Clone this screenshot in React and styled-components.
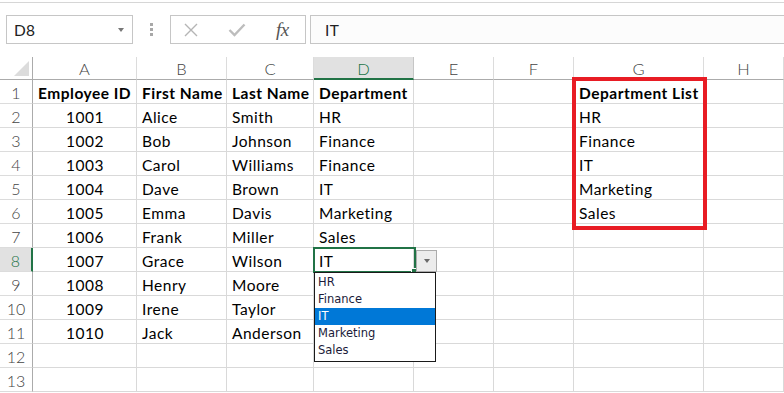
import React from 'react'
import styled, { createGlobalStyle } from 'styled-components'

const GlobalStyle = createGlobalStyle`
  html, body {
    margin: 0;
    padding: 0;
    background: #ffffff;
    overflow: hidden;
  }
  body {
    font-family: Lato, "Liberation Sans", sans-serif;
  }
`

const COLS = [
  { key: 'A', width: 104 },
  { key: 'B', width: 90 },
  { key: 'C', width: 87 },
  { key: 'D', width: 100 },
  { key: 'E', width: 80 },
  { key: 'F', width: 80 },
  { key: 'G', width: 130 },
  { key: 'H', width: 80 },
]

const ROWS = [
  [{ v: 'Employee ID', b: true }, { v: 'First Name', b: true }, { v: 'Last Name', b: true }, { v: 'Department', b: true }, null, null, { v: 'Department List', b: true }],
  [{ v: '1001', c: true }, { v: 'Alice' }, { v: 'Smith' }, { v: 'HR' }, null, null, { v: 'HR' }],
  [{ v: '1002', c: true }, { v: 'Bob' }, { v: 'Johnson' }, { v: 'Finance' }, null, null, { v: 'Finance' }],
  [{ v: '1003', c: true }, { v: 'Carol' }, { v: 'Williams' }, { v: 'Finance' }, null, null, { v: 'IT' }],
  [{ v: '1004', c: true }, { v: 'Dave' }, { v: 'Brown' }, { v: 'IT' }, null, null, { v: 'Marketing' }],
  [{ v: '1005', c: true }, { v: 'Emma' }, { v: 'Davis' }, { v: 'Marketing' }, null, null, { v: 'Sales' }],
  [{ v: '1006', c: true }, { v: 'Frank' }, { v: 'Miller' }, { v: 'Sales' }],
  [{ v: '1007', c: true }, { v: 'Grace' }, { v: 'Wilson' }, { v: 'IT' }],
  [{ v: '1008', c: true }, { v: 'Henry' }, { v: 'Moore' }],
  [{ v: '1009', c: true }, { v: 'Irene' }, { v: 'Taylor' }],
  [{ v: '1010', c: true }, { v: 'Jack' }, { v: 'Anderson' }],
  [],
  [],
]

const OPTIONS = ['HR', 'Finance', 'IT', 'Marketing', 'Sales']

const Page = styled.div`
  width: 784px;
  height: 393px;
  overflow: hidden;
  background: #fff;
`

const TopLine = styled.div`
  height: 2px;
  border-bottom: 1px solid #d6d6d6;
`

const FormulaBar = styled.div`
  display: flex;
  height: 29px;
  margin-top: 12px;
  margin-bottom: 13px;
`

const NameBox = styled.div`
  box-sizing: border-box;
  width: 127px;
  margin-left: 6px;
  border: 1px solid #c6c6c6;
  background: #fff;
  display: flex;
  align-items: center;
  justify-content: space-between;
  padding: 0 8px 0 7px;
  font-size: 15.5px;
  letter-spacing: 0.3px;
  color: #222;
`

const SmallArrow = styled.span`
  width: 0;
  height: 0;
  border-left: 3.5px solid transparent;
  border-right: 3.5px solid transparent;
  border-top: 4px solid ${p => p.$color || '#777'};
`

const Dots = styled.div`
  width: 37px;
  display: flex;
  flex-direction: column;
  align-items: center;
  justify-content: center;
  gap: 2px;
  span {
    width: 3px;
    height: 3px;
    background: #a8a8a8;
  }
`

const FxBox = styled.div`
  box-sizing: border-box;
  width: 136px;
  border: 1px solid #c6c6c6;
  background: #fff;
  display: flex;
  align-items: center;
  padding-left: 12px;
  gap: 29px;
`

const FxText = styled.span`
  font-family: "Liberation Serif", serif;
  font-style: italic;
  font-size: 19px;
  color: #555;
  margin-left: 1px;
  letter-spacing: -0.5px;
`

const FormulaInput = styled.div`
  box-sizing: border-box;
  flex: 1;
  margin-left: 4px;
  border: 1px solid #c6c6c6;
  border-right: none;
  background: #fcfcfc;
  display: flex;
  align-items: center;
  padding-left: 14px;
  font-size: 15.5px;
  letter-spacing: 0.5px;
  color: #222;
`

const Sheet = styled.div`
  position: relative;
  display: grid;
  grid-template-columns: 33px ${COLS.map(c => c.width + 'px').join(' ')};
  grid-template-rows: 23px repeat(13, 24px);
`

const Corner = styled.div`
  box-sizing: border-box;
  border-right: 1px solid #ababab;
  border-bottom: 1px solid #ababab;
  display: flex;
  align-items: flex-end;
  justify-content: flex-end;
  padding: 0 3px 3px 0;
  &::after {
    content: '';
    width: 0;
    height: 0;
    border-left: 15px solid transparent;
    border-bottom: 15px solid #dcdcdc;
  }
`

const ColHead = styled.div`
  box-sizing: border-box;
  display: flex;
  align-items: center;
  justify-content: center;
  font-size: 16.5px;
  font-weight: 300;
  color: ${p => (p.$active ? '#217346' : '#444')};
  background: ${p => (p.$active ? '#e1e1e1' : '#fff')};
  border-right: 1px solid ${p => (p.$active ? '#c6c6c6' : '#dcdcdc')};
  border-bottom: ${p => (p.$active ? '2px solid #217346' : '1px solid #ababab')};
  padding-top: 2px;
`

const RowHead = styled.div`
  box-sizing: border-box;
  display: flex;
  align-items: center;
  justify-content: center;
  font-size: 16px;
  font-weight: 300;
  color: ${p => (p.$active ? '#217346' : '#444')};
  background: ${p => (p.$active ? '#e1e1e1' : '#fff')};
  border-right: ${p => (p.$active ? '2px solid #217346' : '1px solid #ababab')};
  border-bottom: 1px solid #dcdcdc;
  padding-top: 2px;
`

const Cell = styled.div`
  box-sizing: border-box;
  display: flex;
  align-items: center;
  justify-content: ${p => (p.$center ? 'center' : 'flex-start')};
  padding: 2px 4px 0 5px;
  font-size: 15.5px;
  letter-spacing: 0.5px;
  font-weight: ${p => (p.$bold ? 700 : 400)};
  color: #000;
  white-space: nowrap;
  overflow: visible;
  border-right: 1px solid #d9d9d9;
  border-bottom: 1px solid #d9d9d9;
`

const Highlight = styled.div`
  position: absolute;
  left: 572px;
  top: 20px;
  width: 135px;
  height: 153px;
  box-sizing: border-box;
  border: 4px solid #e81c24;
  pointer-events: none;
`

const Selection = styled.div`
  position: absolute;
  left: 313px;
  top: 190px;
  width: 103px;
  height: 26px;
  box-sizing: border-box;
  border: 2px solid #217346;
  &::after {
    content: '';
    position: absolute;
    right: -4px;
    bottom: -4px;
    width: 5px;
    height: 5px;
    background: #217346;
    border: 1px solid #fff;
  }
`

const DropButton = styled.div`
  position: absolute;
  left: 416px;
  top: 193px;
  width: 21px;
  height: 22px;
  box-sizing: border-box;
  border: 1px solid #ababab;
  background: #ececec;
  display: flex;
  align-items: center;
  justify-content: center;
`

const DropList = styled.ul`
  position: absolute;
  left: 314px;
  top: 215px;
  width: 122px;
  margin: 0;
  padding: 1px 0 2px;
  list-style: none;
  box-sizing: border-box;
  border: 1px solid #1a1a1a;
  background: #fff;
  z-index: 2;
`

const DropItem = styled.li`
  height: 17px;
  line-height: 17px;
  padding-left: 3px;
  font-family: "DejaVu Sans", Verdana, sans-serif;
  font-size: 11.5px;
  color: ${p => (p.$selected ? '#fff' : '#1b1b3a')};
  background: ${p => (p.$selected ? '#0078d7' : 'transparent')};
`

const XIcon = () => (
  <svg width="16" height="16" viewBox="0 0 16 16">
    <path d="M2 2 L14 14 M14 2 L2 14" stroke="#b5b5b5" strokeWidth="1.4" fill="none" />
  </svg>
)

const CheckIcon = () => (
  <svg width="18" height="14" viewBox="0 0 18 14">
    <path d="M1.5 7 L6.5 12 L16.5 1.5" stroke="#bdbdbd" strokeWidth="2.4" fill="none" />
  </svg>
)

export default function App() {
  return (
    <Page>
      <GlobalStyle />
      <TopLine />
      <FormulaBar>
        <NameBox>
          D8
          <SmallArrow />
        </NameBox>
        <Dots>
          <span />
          <span />
          <span />
        </Dots>
        <FxBox>
          <XIcon />
          <CheckIcon />
          <FxText>fx</FxText>
        </FxBox>
        <FormulaInput>IT</FormulaInput>
      </FormulaBar>

      <Sheet>
        <Corner />
        {COLS.map(c => (
          <ColHead key={c.key} $active={c.key === 'D'}>
            {c.key}
          </ColHead>
        ))}
        {ROWS.map((row, r) => (
          <React.Fragment key={r}>
            <RowHead $active={r === 7}>{r + 1}</RowHead>
            {COLS.map((c, i) => {
              const cell = row[i]
              return (
                <Cell key={c.key} $bold={cell?.b} $center={cell?.c}>
                  {cell?.v}
                </Cell>
              )
            })}
          </React.Fragment>
        ))}

        <Highlight />
        <Selection />
        <DropButton>
          <SmallArrow $color="#6a6a6a" />
        </DropButton>
        <DropList>
          {OPTIONS.map(o => (
            <DropItem key={o} $selected={o === 'IT'}>
              {o}
            </DropItem>
          ))}
        </DropList>
      </Sheet>
    </Page>
  )
}
